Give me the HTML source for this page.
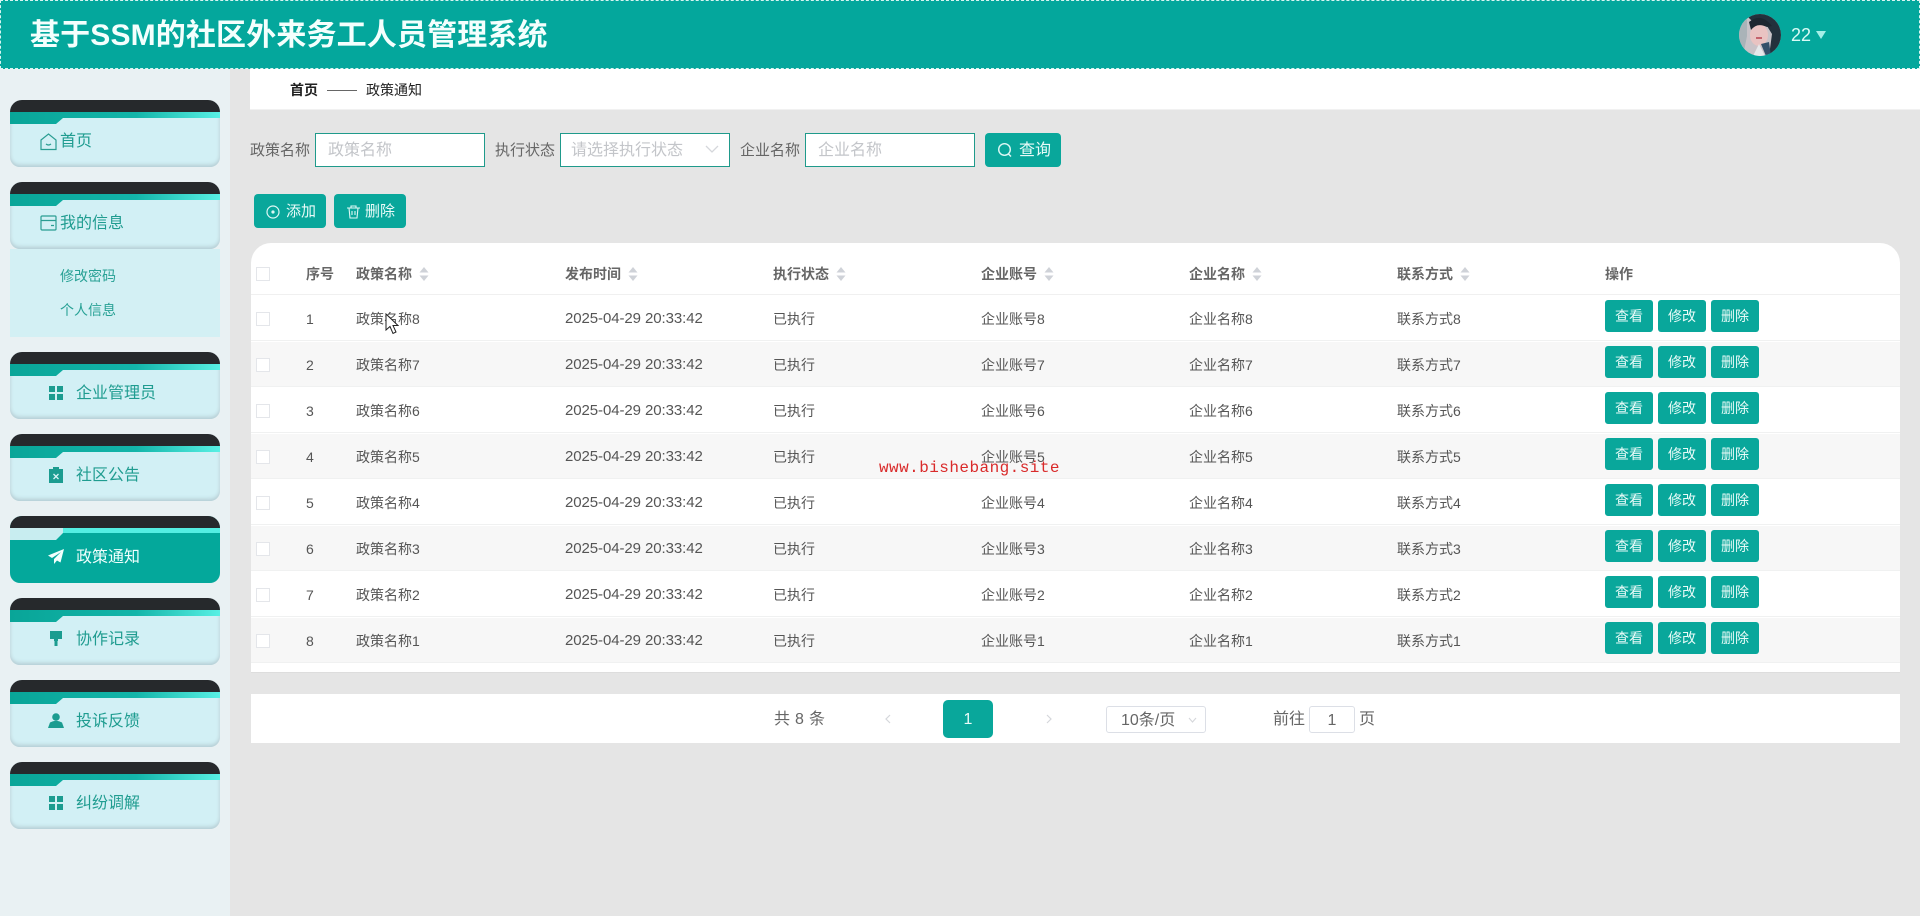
<!DOCTYPE html>
<html lang="zh"><head><meta charset="utf-8"><title>基于SSM的社区外来务工人员管理系统</title>
<style>
*{box-sizing:border-box;margin:0;padding:0}
html,body{width:1920px;height:916px;overflow:hidden;background:#e5e5e5;font-family:"Liberation Sans","Noto Sans CJK SC",sans-serif;color:#555}
.a{position:absolute;white-space:nowrap}
#hd{left:0;top:0;width:1920px;height:69px;background:#04a79c;border:1px dashed #d8f5f2}
#title{left:30px;top:16px;font-size:30px;line-height:40px;font-weight:700;color:#f4fffd;letter-spacing:.15px}
#side{left:0;top:69px;width:230px;height:847px;background:#e9f1f3}
.card{position:absolute;left:10px;width:210px;height:67px;border-radius:12px 12px 10px 10px;overflow:hidden;background:#d2f0f5;box-shadow:inset 0 -4px 4px -2px #b4ccd3,inset 3px 0 3px -2px #c8dde2,inset -3px 0 3px -2px #c8dde2}
.card .k{position:absolute;left:0;top:0;width:210px;height:12px;background:#26292c}
.card svg.t{position:absolute;left:0;top:0}
.card .l{position:absolute;left:66px;top:30px;font-size:16px;line-height:24px;color:#1f9c90;white-space:nowrap}
.card svg.i{position:absolute;left:39px;top:34px}
.card.on{background:#04a89b;box-shadow:none}
.card.on .l{color:#f0fffd}
#sub{left:10px;top:249px;width:210px;height:88px;background:#d3f0f4}
.sl{position:absolute;left:60px;font-size:14px;line-height:20px;color:#28a195}
.lb{font-size:15px;line-height:20px;color:#666}
.ip{height:34px;background:#fff;border:1px solid #1f9a8b;font-size:16px;line-height:33px;color:#c3c5c9;padding-left:12px}
.btn{background:#09a79b;border-radius:4px;color:#e9fbf8;font-size:14px;text-align:center}
#tb{left:251px;top:243px;width:1649px;height:430px;background:#fff;border-radius:20px 20px 0 0;border-bottom:1px solid #ddd}
.r{position:absolute;left:0;width:1649px;height:45px;border-bottom:1px solid #f0f1f1}
.r.z{background:#f7f7f7}
.r span,.h span{position:absolute;top:0;font-size:14px;line-height:46px;color:#555;white-space:nowrap}
.r .d{font-size:15px;letter-spacing:-.08px;color:#555}
.r i,.h i{position:absolute;left:5px;width:14px;height:14px;background:#fff;border:1px solid #e4e6ea}
.r b{position:absolute;width:48px;height:32px;top:4px;background:#09a79b;border-radius:3px;color:#e9fbf8;font-weight:400;font-size:14px;line-height:33px;text-align:center}
.h{position:absolute;left:0;top:0;width:1649px;height:52px;border-bottom:1px solid #f0f0f0}
.h span{line-height:63px;font-weight:700;color:#666;font-size:14px}
.h i{top:24px}
.h svg{position:absolute;top:24px}
#pg{left:251px;top:694px;width:1649px;height:49px;background:#fff}
.p{font-size:16px;line-height:20px;color:#666}
.bx{background:#fff;border:1px solid #dcdfe6;border-radius:3px;height:27px;font-size:16px;line-height:27px;color:#666}
.s{left:0}
</style></head><body>
<div class="a" id="hd"></div>
<div class="a" id="title">基于SSM的社区外来务工人员管理系统</div>
<svg class="a" style="left:1739px;top:14px" width="42" height="42" viewBox="0 0 42 42"><defs><clipPath id="av"><circle cx="21" cy="21" r="21"/></clipPath></defs><g clip-path="url(#av)"><rect width="42" height="42" fill="#c9c3c8"/><path d="M6 0h36v42H30L33 20 28 12 16 11 12 6z" fill="#23313c"/><ellipse cx="20" cy="21" rx="9" ry="11" fill="#e9c3c2"/><path d="M10 8 Q22 -2 33 12 L28 13 Q18 8 12 16z" fill="#1c2730"/><path d="M0 0h8v22L4 42H0z" fill="#aab3b8"/><path d="M14 42 20 30 26 42z" fill="#e6e8ea"/><path d="M22 30l5 12h5l-2-14z" fill="#34506a"/><path d="M17 24h6" stroke="#b8434f" stroke-width="1.6"/></g></svg>
<div class="a" style="left:1791px;top:23px;font-size:18px;line-height:24px;color:#d8fbf6">22</div>
<svg class="a" style="left:1816px;top:31px" width="10" height="8"><path d="M0 0h10L5 8z" fill="#a5efe8"/></svg>

<div class="a" id="side"></div>
<div class="a" id="sub"></div>
<div class="sl" style="top:266px">修改密码</div>
<div class="sl" style="top:300px">个人信息</div>

<div class="card" style="top:100px"><div class="k"></div><svg class="t" width="210" height="26"><defs><linearGradient id="g"><stop offset="0" stop-color="#09a598"/><stop offset=".6" stop-color="#13b5a9"/><stop offset="1" stop-color="#58f0e4"/></linearGradient></defs><path d="M0 12H210V18H53L46 24H0z" fill="url(#g)"/></svg>
<svg class="i" style="left:30px;top:33px" width="17" height="18" viewBox="0 0 17 18" fill="none" stroke="#2a9d92" stroke-width="1.2"><path d="M1 7 8.5 1 16 7V16.5H1z"/><path d="M6 11q2.500 2 5 0"/></svg><div class="l" style="left:50px">首页</div></div>

<div class="card" style="top:182px"><div class="k"></div><svg class="t" width="210" height="26"><path d="M0 12H210V18H53L46 24H0z" fill="url(#g)"/></svg>
<svg class="i" style="left:30px;top:33px" width="17" height="16" viewBox="0 0 17 16" fill="none" stroke="#2a9d92" stroke-width="1.2"><rect x="1" y="1" width="15" height="14" rx="1"/><path d="M1 5.500H16M11 10.500h3"/></svg><div class="l" style="left:50px">我的信息</div></div>

<div class="card" style="top:352px"><div class="k"></div><svg class="t" width="210" height="26"><path d="M0 12H210V18H53L46 24H0z" fill="url(#g)"/></svg>
<svg class="i" width="14" height="14" viewBox="0 0 14 14" fill="#1b9c90"><rect width="6" height="6"/><rect x="8" width="6" height="6"/><rect y="8" width="6" height="6"/><rect x="8" y="8" width="6" height="6"/></svg><div class="l">企业管理员</div></div>

<div class="card" style="top:434px"><div class="k"></div><svg class="t" width="210" height="26"><path d="M0 12H210V18H53L46 24H0z" fill="url(#g)"/></svg>
<svg class="i" style="top:33px" width="14" height="16" viewBox="0 0 14 16"><path d="M0 2H4V0H10V2H14V16H0z" fill="#1b9c90"/><path d="M4.500 7 9.500 12M9.500 7 4.500 12" stroke="#d8f3f5" stroke-width="1.300"/></svg><div class="l">社区公告</div></div>

<div class="card on" style="top:516px"><div class="k"></div><svg class="t" width="210" height="26"><path d="M0 12H210V17H53L46 24H0z" fill="#c8edf0"/><path d="M53 12H210V17H53z" fill="#54eee2"/></svg>
<svg class="i" style="left:38px;top:33px" width="16" height="15" viewBox="0 0 16 15"><path d="M16 0 0 6.500 4 9 13 3 6 10V15L9 11.500 12.500 13.500z" fill="#f2fffd"/></svg><div class="l">政策通知</div></div>

<div class="card" style="top:598px"><div class="k"></div><svg class="t" width="210" height="26"><path d="M0 12H210V18H53L46 24H0z" fill="url(#g)"/></svg>
<svg class="i" width="12" height="15" viewBox="0 0 12 15" style="left:40px;top:33px"><path d="M0 0H12V8H8V10H7.500V15H4.500V10H4V8H0z" fill="#1b9c90"/></svg><div class="l">协作记录</div></div>

<div class="card" style="top:680px"><div class="k"></div><svg class="t" width="210" height="26"><path d="M0 12H210V18H53L46 24H0z" fill="url(#g)"/></svg>
<svg class="i" width="16" height="15" viewBox="0 0 16 15" style="left:38px;top:33px"><circle cx="8" cy="4" r="3.800" fill="#1b9c90"/><path d="M0 15 2 9.500Q8 6 14 9.500L16 15z" fill="#1b9c90"/></svg><div class="l">投诉反馈</div></div>

<div class="card" style="top:762px"><div class="k"></div><svg class="t" width="210" height="26"><path d="M0 12H210V18H53L46 24H0z" fill="url(#g)"/></svg>
<svg class="i" width="14" height="14" viewBox="0 0 14 14" fill="#1b9c90"><rect width="6" height="6"/><rect x="8" width="6" height="6"/><rect y="8" width="6" height="6"/><rect x="8" y="8" width="6" height="6"/></svg><div class="l">纠纷调解</div></div>

<div class="a" style="left:250px;top:69px;width:1670px;height:41px;background:#fff;border-bottom:1px solid #f1f1f1"></div>
<div class="a" style="left:290px;top:80px;font-size:14px;line-height:20px;font-weight:700;color:#222">首页</div>
<div class="a" style="left:327px;top:90px;width:30px;height:1px;background:#666"></div>
<div class="a" style="left:366px;top:80px;font-size:14px;line-height:20px;color:#222">政策通知</div>

<div class="a lb" style="left:250px;top:141px">政策名称</div>
<div class="a ip" style="left:315px;top:133px;width:170px">政策名称</div>
<div class="a lb" style="left:495px;top:141px">执行状态</div>
<div class="a ip" style="left:560px;top:133px;width:170px;padding-left:10px">请选择执行状态</div>
<svg class="a" style="left:705px;top:145px" width="14" height="8" fill="none" stroke="#d5d7db" stroke-width="1.300"><path d="M1 1 7 7 13 1"/></svg>
<div class="a lb" style="left:740px;top:141px">企业名称</div>
<div class="a ip" style="left:805px;top:133px;width:170px">企业名称</div>
<div class="a btn" style="left:985px;top:133px;width:76px;height:34px"></div>
<svg class="a" style="left:997px;top:142px" width="16" height="16" fill="none" stroke="#dff8f5" stroke-width="1.400"><circle cx="7.500" cy="7.500" r="5.800"/><path d="M11.500 12 14 14.500"/></svg>
<div class="a" style="left:1019px;top:140px;font-size:16px;line-height:21px;color:#e9fbf8">查询</div>

<div class="a btn" style="left:254px;top:194px;width:72px;height:34px"></div>
<svg class="a" style="left:266px;top:205px" width="14" height="14" fill="none" stroke="#dff8f5" stroke-width="1.200"><circle cx="7" cy="7" r="6"/><circle cx="7" cy="7" r="1" fill="#dff8f5"/></svg>
<div class="a" style="left:286px;top:202px;font-size:15px;line-height:20px;color:#e9fbf8">添加</div>
<div class="a btn" style="left:334px;top:194px;width:72px;height:34px"></div>
<svg class="a" style="left:347px;top:205px" width="13" height="14" fill="none" stroke="#dff8f5" stroke-width="1.100"><path d="M0 3H13M4 3V1H9V3M2 3 3 13H10L11 3M5 6V10M8 6V10"/></svg>
<div class="a" style="left:365px;top:202px;font-size:15px;line-height:20px;color:#e9fbf8">删除</div>

<div class="a" id="tb">
<div class="h"><i></i><span style="left:55px">序号</span><span style="left:105px">政策名称</span><svg style="left:168px" width="10" height="14"><path d="M5 0 9.500 5.500H.5zM5 14 9.500 8.500H.5z" fill="#cfd2d8"/></svg><span style="left:314px">发布时间</span><svg style="left:377px" width="10" height="14"><path d="M5 0 9.500 5.500H.5zM5 14 9.500 8.500H.5z" fill="#cfd2d8"/></svg><span style="left:522px">执行状态</span><svg style="left:585px" width="10" height="14"><path d="M5 0 9.500 5.500H.5zM5 14 9.500 8.500H.5z" fill="#cfd2d8"/></svg><span style="left:730px">企业账号</span><svg style="left:793px" width="10" height="14"><path d="M5 0 9.500 5.500H.5zM5 14 9.500 8.500H.5z" fill="#cfd2d8"/></svg><span style="left:938px">企业名称</span><svg style="left:1001px" width="10" height="14"><path d="M5 0 9.500 5.500H.5zM5 14 9.500 8.500H.5z" fill="#cfd2d8"/></svg><span style="left:1146px">联系方式</span><svg style="left:1209px" width="10" height="14"><path d="M5 0 9.500 5.500H.5zM5 14 9.500 8.500H.5z" fill="#cfd2d8"/></svg><span style="left:1354px">操作</span></div>

<div class="r" style="top:53px"><i style="top:16px"></i><span style="left:55px">1</span><span style="left:105px">政策名称8</span><span class="d" style="left:314px">2025-04-29 20:33:42</span><span style="left:522px">已执行</span><span style="left:730px">企业账号8</span><span style="left:938px">企业名称8</span><span style="left:1146px">联系方式8</span><b style="left:1354px">查看</b><b style="left:1407px">修改</b><b style="left:1460px">删除</b></div>
<div class="r z" style="top:99px"><i style="top:16px"></i><span style="left:55px">2</span><span style="left:105px">政策名称7</span><span class="d" style="left:314px">2025-04-29 20:33:42</span><span style="left:522px">已执行</span><span style="left:730px">企业账号7</span><span style="left:938px">企业名称7</span><span style="left:1146px">联系方式7</span><b style="left:1354px">查看</b><b style="left:1407px">修改</b><b style="left:1460px">删除</b></div>
<div class="r" style="top:145px"><i style="top:16px"></i><span style="left:55px">3</span><span style="left:105px">政策名称6</span><span class="d" style="left:314px">2025-04-29 20:33:42</span><span style="left:522px">已执行</span><span style="left:730px">企业账号6</span><span style="left:938px">企业名称6</span><span style="left:1146px">联系方式6</span><b style="left:1354px">查看</b><b style="left:1407px">修改</b><b style="left:1460px">删除</b></div>
<div class="r z" style="top:191px"><i style="top:16px"></i><span style="left:55px">4</span><span style="left:105px">政策名称5</span><span class="d" style="left:314px">2025-04-29 20:33:42</span><span style="left:522px">已执行</span><span style="left:730px">企业账号5</span><span style="left:938px">企业名称5</span><span style="left:1146px">联系方式5</span><b style="left:1354px">查看</b><b style="left:1407px">修改</b><b style="left:1460px">删除</b></div>
<div class="r" style="top:237px"><i style="top:16px"></i><span style="left:55px">5</span><span style="left:105px">政策名称4</span><span class="d" style="left:314px">2025-04-29 20:33:42</span><span style="left:522px">已执行</span><span style="left:730px">企业账号4</span><span style="left:938px">企业名称4</span><span style="left:1146px">联系方式4</span><b style="left:1354px">查看</b><b style="left:1407px">修改</b><b style="left:1460px">删除</b></div>
<div class="r z" style="top:283px"><i style="top:16px"></i><span style="left:55px">6</span><span style="left:105px">政策名称3</span><span class="d" style="left:314px">2025-04-29 20:33:42</span><span style="left:522px">已执行</span><span style="left:730px">企业账号3</span><span style="left:938px">企业名称3</span><span style="left:1146px">联系方式3</span><b style="left:1354px">查看</b><b style="left:1407px">修改</b><b style="left:1460px">删除</b></div>
<div class="r" style="top:329px"><i style="top:16px"></i><span style="left:55px">7</span><span style="left:105px">政策名称2</span><span class="d" style="left:314px">2025-04-29 20:33:42</span><span style="left:522px">已执行</span><span style="left:730px">企业账号2</span><span style="left:938px">企业名称2</span><span style="left:1146px">联系方式2</span><b style="left:1354px">查看</b><b style="left:1407px">修改</b><b style="left:1460px">删除</b></div>
<div class="r z" style="top:375px"><i style="top:16px"></i><span style="left:55px">8</span><span style="left:105px">政策名称1</span><span class="d" style="left:314px">2025-04-29 20:33:42</span><span style="left:522px">已执行</span><span style="left:730px">企业账号1</span><span style="left:938px">企业名称1</span><span style="left:1146px">联系方式1</span><b style="left:1354px">查看</b><b style="left:1407px">修改</b><b style="left:1460px">删除</b></div>
</div>

<div class="a" id="pg"></div>
<div class="a p" style="left:774px;top:710px;letter-spacing:.3px">共 8 条</div>
<svg class="a" style="left:884px;top:714px" width="7" height="10" fill="none" stroke="#d5d7db" stroke-width="1.200"><path d="M6 1 2 5 6 9"/></svg>
<div class="a" style="left:943px;top:700px;width:50px;height:38px;background:#09a79b;border-radius:5px;color:#e9fbf8;font-size:16px;line-height:39px;text-align:center">1</div>
<svg class="a" style="left:1046px;top:714px" width="7" height="10" fill="none" stroke="#d5d7db" stroke-width="1.200"><path d="M1 1 5 5 1 9"/></svg>
<div class="a bx" style="left:1106px;top:706px;width:100px;padding-left:14px">10条/页</div>
<svg class="a" style="left:1188px;top:717px" width="9" height="6" fill="none" stroke="#d5d7db" stroke-width="1.100"><path d="M1 1 4.500 5 8 1"/></svg>
<div class="a p" style="left:1273px;top:710px">前往</div>
<div class="a bx" style="left:1309px;top:706px;width:46px;text-align:center">1</div>
<div class="a p" style="left:1359px;top:710px">页</div>

<div class="a" style="left:879px;top:458px;font-family:'Liberation Mono',monospace;font-size:16px;letter-spacing:.45px;line-height:20px;color:#d92a2a">www.bishebang.site</div>
<svg class="a" style="left:385px;top:313px" width="14" height="22" viewBox="0 0 14 22"><path d="M1 1V17L5 13.500 8 20.500 11 19 8 12.500H13z" fill="#fff" stroke="#222" stroke-width="1"/></svg>
</body></html>
